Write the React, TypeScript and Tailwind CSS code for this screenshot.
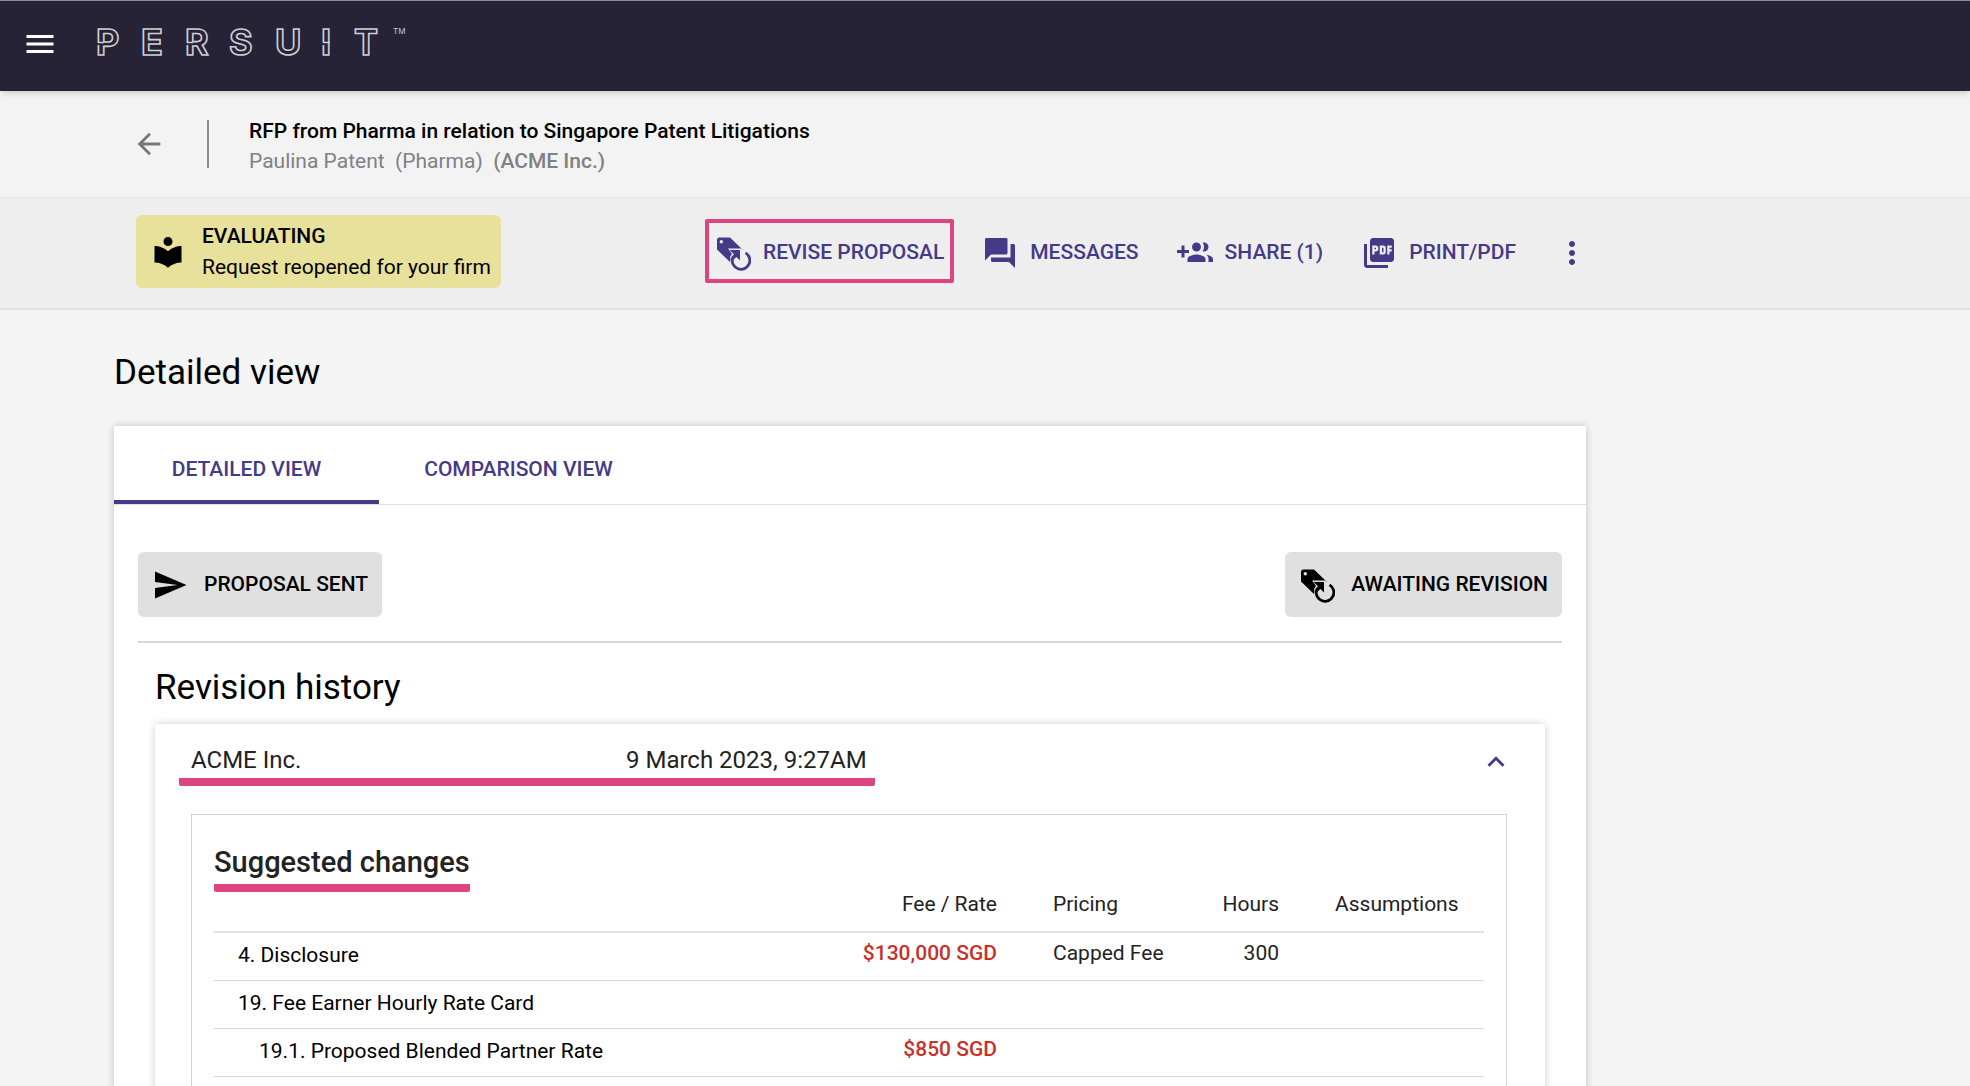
import { useState } from 'react'
import {
  MdArrowBack,
  MdExpandLess,
  MdExpandMore,
  MdForum,
  MdLocalLibrary,
  MdMenu,
  MdMoreVert,
  MdPictureAsPdf,
  MdSend,
} from 'react-icons/md'

type Row = {
  name: string
  nested?: boolean
  fee?: string
  pricing?: string
  hours?: string
}

const rows: Row[] = [
  { name: '4. Disclosure', fee: '$130,000 SGD', pricing: 'Capped Fee', hours: '300' },
  { name: '19. Fee Earner Hourly Rate Card' },
  { name: '19.1. Proposed Blended Partner Rate', nested: true, fee: '$850 SGD' },
]

function Logo() {
  return (
    <svg width="312" height="50" viewBox="0 0 312 50" role="img" aria-label="PERSUIT">
      <text
        x="0 45 89 133 179 225 258"
        y="37"
        fill="none"
        stroke="#cfced3"
        strokeWidth="1.6"
        className="font-[Inter,sans-serif] text-[36px] font-bold"
      >
        PERSUIT
      </text>
      {/* small breaks in the outlines */}
      <path d="M0 26h4.500M89 26h4.500M226 26h4.500" stroke="#272336" strokeWidth="2" />
      <path d="M2 24.500h6M91 24.500h6M228 24.500h6" stroke="#cfced3" strokeWidth="1.4" />
      <text x="297" y="16" fill="#c9c8ce" className="font-[Inter,sans-serif] text-[8px]">
        TM
      </text>
    </svg>
  )
}

function ReviseIcon() {
  return (
    <svg width="36" height="36" viewBox="0 0 36 36" fill="currentColor" aria-hidden="true" className="shrink-0">
      <mask id="tag-cut">
        <rect width="36" height="36" fill="#fff" />
        <circle cx="6.300" cy="6.800" r="1.700" fill="#000" />
        <path d="M13 13.400h14v13L22 22l-4 5-3-5 2-3z" fill="#000" />
        <circle cx="26" cy="25.500" r="10.800" fill="#000" />
      </mask>
      <path mask="url(#tag-cut)" d="M4.500 2.500h10.500L28 15 15 27 2 14.500V5a2.500 2.500 0 0 1 2.500-2.500z" />
      <path d="M14.500 15H25V25.500L21.500 22L18 25L16.200 22L19 19.300z" />
      <path d="M30.500 17.900A8.800 8.800 0 1 1 17.500 23.300" fill="none" stroke="currentColor" strokeWidth="2.800" />
    </svg>
  )
}

function ShareIcon() {
  return (
    <svg width="36" height="36" viewBox="0 0 24 24" fill="currentColor" aria-hidden="true" className="shrink-0">
      <path d="M8 10H5V7H3v3H0v2h3v3h2v-3h3v-2zm10 1c1.660 0 2.990-1.340 2.990-3S19.660 5 18 5c-.32 0-.63.05-.91.14.57.81.9 1.790.9 2.860s-.34 2.040-.9 2.860c.28.09.59.14.91.14zm-5 0c1.660 0 2.990-1.340 2.990-3S14.660 5 13 5c-1.660 0-3 1.340-3 3s1.340 3 3 3zm6.620 2.160c.83.73 1.380 1.660 1.380 2.840v2h3v-2c0-1.540-2.370-2.490-4.380-2.840zM13 13c-2 0-6 1-6 3v2h12v-2c0-2-4-3-6-3z" />
    </svg>
  )
}

export default function App() {
  const [tab, setTab] = useState('detailed')
  const [open, setOpen] = useState(true)

  const action = 'flex h-16 items-center gap-3 border-4 px-1.5 pt-1 text-[21px] font-medium whitespace-nowrap text-[#453a88]'

  return (
    <div className="min-h-screen bg-[#f4f4f4] font-[Roboto,sans-serif] text-black">
      {/* Top bar */}
      <header className="relative flex h-[91px] items-start border-t border-[#8f8e98] bg-[#272336] px-[22px] shadow-md">
        <button aria-label="Menu" className="mt-[25px] text-white">
          <MdMenu size={36} />
        </button>
        <a href="#" className="mt-[17px] ml-[38px]">
          <Logo />
        </a>
      </header>

      {/* Request title */}
      <div className="border-b border-[#e4e4e4] bg-[#f3f3f3]">
        <div className="flex h-[106px] items-center pl-[132px]">
          <button aria-label="Back" className="text-[#77767e]">
            <MdArrowBack size={34} />
          </button>
          <div className="ml-[41px] h-12 border-l-2 border-[#8f8e94]" />
          <div className="ml-10 pt-1 text-[21px] leading-[30px]">
            <h1 className="font-medium">RFP from Pharma in relation to Singapore Patent Litigations</h1>
            <p className="whitespace-pre text-[#808086]">
              Paulina Patent{'  '}(Pharma){'  '}
              <span className="font-medium">(ACME Inc.)</span>
            </p>
          </div>
        </div>
      </div>

      {/* Status and actions */}
      <div className="border-b-2 border-[#e0e0e0] bg-[#eeeeee]">
        <div className="flex h-[110px] max-w-[1600px] items-center justify-between pb-1 pl-[136px]">
          <div className="flex h-[73px] items-center gap-4 rounded-md bg-[#e8e19b] pt-0.5 pr-2.5 pl-[14px] text-[21px]">
            <MdLocalLibrary size={36} />
            <div className="leading-[31px]">
              <p className="font-medium">EVALUATING</p>
              <p>Request reopened for your firm</p>
            </div>
          </div>
          <div className="flex items-center gap-[18px]">
            <button className={`${action} rounded-xs border-[#dc4580]`}>
              <ReviseIcon />
              REVISE PROPOSAL
            </button>
            <button className={`${action} border-transparent`}>
              <MdForum size={36} />
              MESSAGES
            </button>
            <button className={`${action} border-transparent`}>
              <ShareIcon />
              SHARE (1)
            </button>
            <button className={`${action} border-transparent`}>
              <MdPictureAsPdf size={36} />
              PRINT/PDF
            </button>
            <button aria-label="More" className={`${action} border-transparent`}>
              <MdMoreVert size={36} />
            </button>
          </div>
        </div>
      </div>

      <main className="max-w-[1700px] px-[114px] pt-10">
        <h2 className="text-[35px] leading-[46px]">Detailed view</h2>

        <section className="mt-[30px] bg-white shadow-[0_0_8px_rgba(0,0,0,0.2)]">
          <div role="tablist" className="flex h-[79px] border-b border-[#dddddd] text-[21px] font-medium text-[#453a88]">
            <button
              role="tab"
              aria-selected={tab === 'detailed'}
              onClick={() => setTab('detailed')}
              className={`w-[265px] border-b-4 pt-3.5 ${tab === 'detailed' ? 'border-[#453a88]' : 'border-transparent'}`}
            >
              DETAILED VIEW
            </button>
            <button
              role="tab"
              aria-selected={tab === 'comparison'}
              onClick={() => setTab('comparison')}
              className={`w-[279px] border-b-4 pt-3.5 ${tab === 'comparison' ? 'border-[#453a88]' : 'border-transparent'}`}
            >
              COMPARISON VIEW
            </button>
          </div>

          <div className="px-6 pt-[47px]">
            <div className="flex items-center justify-between border-b-2 border-[#d6d6d6] pb-6 text-[21px] font-medium">
              <div className="flex h-[65px] items-center gap-4 rounded-md bg-[#e0e0e0] px-[14px]">
                <MdSend size={36} />
                PROPOSAL SENT
              </div>
              <div className="flex h-[65px] items-center gap-4 rounded-md bg-[#e0e0e0] px-[14px]">
                <ReviseIcon />
                AWAITING REVISION
              </div>
            </div>

            <div className="px-[17px] pt-[22px]">
              <h2 className="text-[35px] leading-[46px]">Revision history</h2>

              <div className="mt-[13px] rounded-sm bg-white pr-[38px] pb-10 pl-9 text-[#222222] shadow-[0_0_8px_rgba(0,0,0,0.2)]">
                <button
                  aria-expanded={open}
                  onClick={() => setOpen(!open)}
                  className="flex w-full items-start justify-between pt-[21px] pb-7 text-left text-2xl"
                >
                  <span className="-ml-3 flex rounded-xs border-b-8 border-[#dc4580] pr-2 pb-0.5 pl-3 leading-[31px]">
                    <span className="w-[435px]">ACME Inc.</span>
                    <span>9 March 2023, 9:27AM</span>
                  </span>
                  <span className="-mr-1.5 text-[#453a88]">
                    {open ? <MdExpandLess size={34} /> : <MdExpandMore size={34} />}
                  </span>
                </button>

                {open && (
                  <div className="border border-[#d4d4d4] px-[22px] pt-[29px] pb-10">
                    <h3 className="inline-block rounded-xs border-b-8 border-[#dc4580] pb-1 text-[29px] leading-9 font-medium">
                      Suggested changes
                    </h3>
                    <table className="w-full table-fixed text-[21px] leading-6">
                      <thead>
                        <tr className="h-10 border-b-2 border-[#e2e4e4] align-top">
                          <th />
                          <th className="w-[193px] pr-7 text-right font-normal">Fee / Rate</th>
                          <th className="w-[167px] pl-7 text-left font-normal">Pricing</th>
                          <th className="w-[115px] pr-7 text-right font-normal">Hours</th>
                          <th className="w-[177px] pl-7 text-left font-normal">Assumptions</th>
                        </tr>
                      </thead>
                      <tbody>
                        {rows.map((row) => (
                          <tr key={row.name} className="h-12 border-b border-[#d3d7d7] align-top">
                            <td className={`pt-2.5 text-black ${row.nested ? 'pl-[45px]' : 'pl-6'}`}>{row.name}</td>
                            <td className="pt-2 pr-7 text-right font-medium text-[#c9302c]">{row.fee}</td>
                            <td className="pt-2 pl-7">{row.pricing}</td>
                            <td className="pt-2 pr-7 text-right">{row.hours}</td>
                            <td />
                          </tr>
                        ))}
                      </tbody>
                    </table>
                  </div>
                )}
              </div>
            </div>
          </div>
        </section>
      </main>
    </div>
  )
}
